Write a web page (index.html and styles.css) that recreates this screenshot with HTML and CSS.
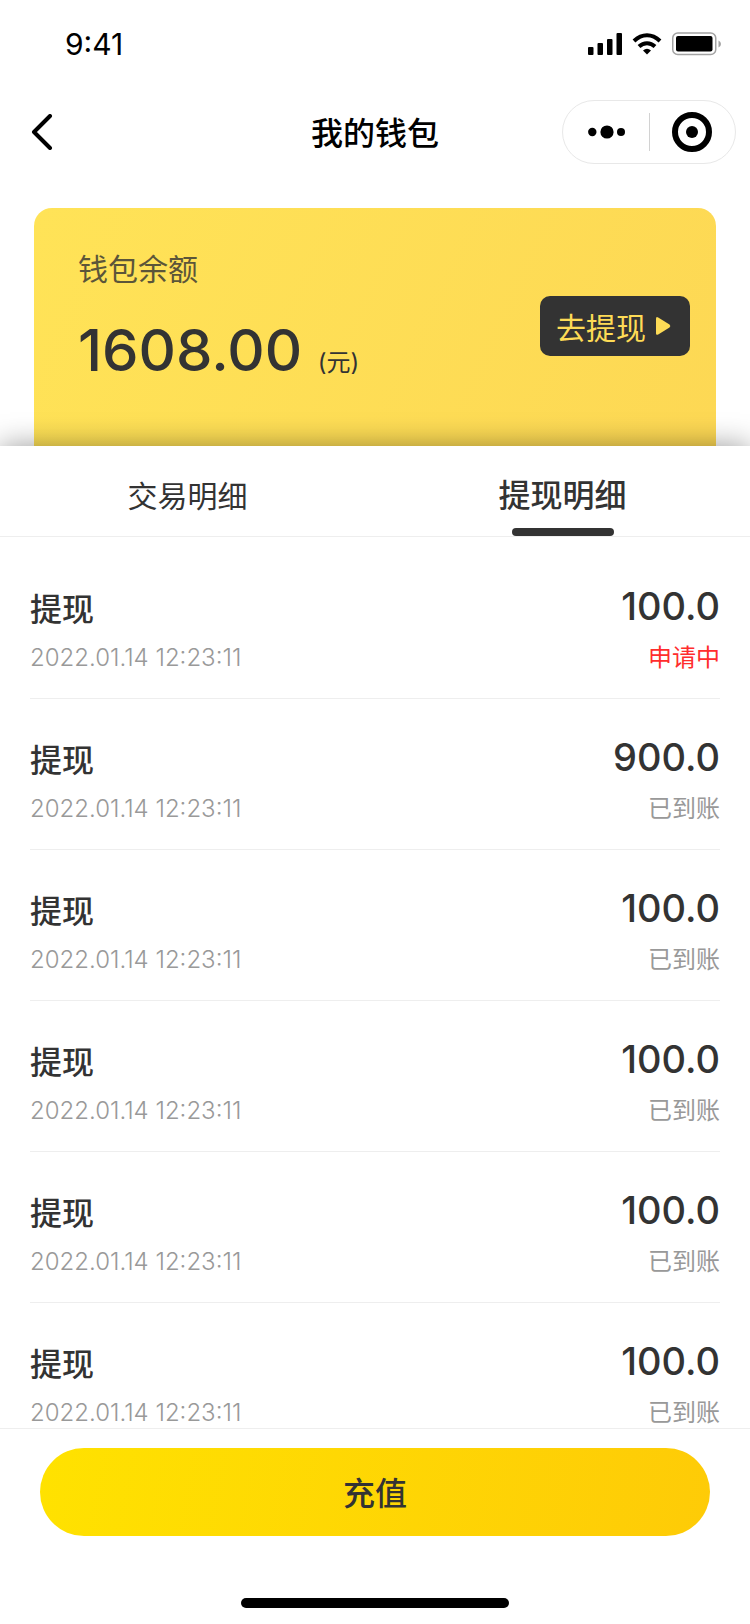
FILE: index.html
```
<!DOCTYPE html>
<html lang="zh-Hans">
<head>
    <meta charset="UTF-8">
    <meta name="viewport" content="width=device-width, initial-scale=1.0">
    <title>我的钱包</title>
    <link rel="stylesheet" href="styles.css">
</head>
<body>

    <div class="status-bar">
        <span class="time">9:41</span>
        <div class="status-icons">
            <svg width="34" height="22" viewBox="0 0 34 22">
                <rect x="0" y="14" width="5.500" height="8" rx="1"/>
                <rect x="9.500" y="10" width="5.500" height="12" rx="1"/>
                <rect x="19" y="6" width="5.500" height="16" rx="1"/>
                <rect x="28.500" y="0" width="5.500" height="22" rx="1"/>
            </svg>
            <svg width="30" height="22" viewBox="0 0 30 22" fill="none" stroke="#000" stroke-width="4">
                <path d="M2 8Q8 2.300 15 2.300T28 8"/>
                <path d="M7 13.500Q10.500 10.200 15 10.200T23 13.500"/>
                <path d="M11 17.500Q15 14 19 17.500L15 21.500Z" fill="#000" stroke="none"/>
            </svg>
            <svg width="50" height="24" viewBox="0 0 50 24">
                <rect x="0.750" y="1" width="43" height="21.500" rx="5" fill="none" stroke="#a3a3a3" stroke-width="1.500"/>
                <rect x="4" y="4" width="36.500" height="15.500" rx="2"/>
                <path d="M46.500 8.500Q49 9.500 49 12T46.500 15.500Z" fill="#a3a3a3"/>
            </svg>
        </div>
    </div>

    <header class="nav-bar">
        <button class="back-btn" aria-label="返回">
            <svg width="22" height="36" viewBox="0 0 22 36" fill="none" stroke="#000" stroke-width="4" stroke-linecap="round" stroke-linejoin="round">
                <path d="M19 2L3 18L19 34"/>
            </svg>
        </button>
        <h1>我的钱包</h1>
        <div class="capsule">
            <button aria-label="更多">
                <svg width="38" height="14" viewBox="0 0 38 14">
                    <circle cx="5.300" cy="7" r="4.200"/>
                    <circle cx="20" cy="7" r="6.600"/>
                    <circle cx="34" cy="7" r="4"/>
                </svg>
            </button>
            <button aria-label="关闭">
                <svg width="40" height="40" viewBox="0 0 40 40">
                    <circle cx="20" cy="20" r="17" fill="none" stroke="#000" stroke-width="6"/>
                    <circle cx="20" cy="20" r="6"/>
                </svg>
            </button>
        </div>
    </header>

    <section class="wallet-card">
        <div>
            <p class="wallet-label">钱包余额</p>
            <p class="wallet-balance">1608.00 <span>(元)</span></p>
        </div>
        <button class="withdraw-btn">
            去提现
            <svg width="16" height="20" viewBox="0 0 16 20">
                <path d="M0 2.500Q0 .2 2.200 1.400L13.500 8.600Q15.200 10 13.500 11.400L2.200 18.400Q0 19.600 0 17.500Z" fill="#fddb56"/>
            </svg>
        </button>
    </section>

    <main class="sheet">
        <div class="tabs" role="tablist">
            <button class="tab" role="tab" aria-selected="false">交易明细</button>
            <button class="tab active" role="tab" aria-selected="true">提现明细</button>
        </div>

        <ul class="record-list">
            <li class="record">
                <span class="record-title">提现</span>
                <span class="record-amount">100.0</span>
                <span class="record-date">2022.01.14 12:23:11</span>
                <span class="record-status pending">申请中</span>
            </li>
            <li class="record">
                <span class="record-title">提现</span>
                <span class="record-amount">900.0</span>
                <span class="record-date">2022.01.14 12:23:11</span>
                <span class="record-status">已到账</span>
            </li>
            <li class="record">
                <span class="record-title">提现</span>
                <span class="record-amount">100.0</span>
                <span class="record-date">2022.01.14 12:23:11</span>
                <span class="record-status">已到账</span>
            </li>
            <li class="record">
                <span class="record-title">提现</span>
                <span class="record-amount">100.0</span>
                <span class="record-date">2022.01.14 12:23:11</span>
                <span class="record-status">已到账</span>
            </li>
            <li class="record">
                <span class="record-title">提现</span>
                <span class="record-amount">100.0</span>
                <span class="record-date">2022.01.14 12:23:11</span>
                <span class="record-status">已到账</span>
            </li>
            <li class="record">
                <span class="record-title">提现</span>
                <span class="record-amount">100.0</span>
                <span class="record-date">2022.01.14 12:23:11</span>
                <span class="record-status">已到账</span>
            </li>
        </ul>

        <footer class="footer">
            <button class="recharge-btn">充值</button>
            <div class="home-indicator"></div>
        </footer>
    </main>

</body>
</html>
```
FILE: styles.css
```
* {
    box-sizing: border-box;
    margin: 0;
    padding: 0;
}

body {
    display: flex;
    flex-direction: column;
    height: 100vh;
    overflow: hidden;
    background-color: #fff;
    color: #333;
    font-family: Inter, "Noto Sans CJK SC", sans-serif;
}

button {
    border: none;
    background: none;
    color: inherit;
    font-family: inherit;
    cursor: pointer;
}

svg {
    display: block;
}

/* 状态栏 */
.status-bar {
    display: flex;
    justify-content: space-between;
    align-items: center;
    height: 88px;
    padding: 0 28px 0 65px;
    color: #000;
}

.time {
    font-size: 30px;
    font-weight: 400;
}

.status-icons {
    display: flex;
    align-items: center;
    gap: 10px;
}

/* 导航栏 */
.nav-bar {
    display: grid;
    grid-template-columns: 1fr auto 1fr;
    align-items: center;
    height: 88px;
    padding: 0 14px;
    color: #000;
}

.nav-bar h1 {
    padding-bottom: 2px;
    font-size: 32px;
    font-weight: 500;
}

.back-btn {
    justify-self: start;
    margin-left: 17px;
}

.capsule {
    display: flex;
    justify-self: end;
    width: 174px;
    height: 64px;
    border: 1px solid #e8e8e8;
    border-radius: 32px;
}

.capsule button {
    display: flex;
    flex: 1;
    align-items: center;
    justify-content: center;
    margin: 12px 0;
}

.capsule button + button {
    border-left: 1px solid #d2d2d2;
}

/* 余额卡片 */
.wallet-card {
    display: flex;
    flex-shrink: 0;
    justify-content: space-between;
    align-items: flex-start;
    height: 238px;
    margin: 32px 34px 0;
    padding: 40px 26px 0 44px;
    border-radius: 18px 18px 0 0;
    background: linear-gradient(115deg, #ffe357, #fdd854);
}

.wallet-label {
    font-size: 30px;
    line-height: 42px;
    opacity: 0.8;
}

.wallet-balance {
    margin-top: 24px;
    font-size: 58px;
    font-weight: 500;
    line-height: 72px;
}

.wallet-balance span {
    font-size: 24px;
    font-weight: 400;
}

.withdraw-btn {
    display: flex;
    align-items: center;
    justify-content: center;
    gap: 10px;
    width: 150px;
    height: 60px;
    margin-top: 48px;
    padding-right: 2px;
    border-radius: 10px;
    background-color: #333;
    color: #fddb56;
    font-size: 30px;
}

/* 明细面板 */
.sheet {
    display: flex;
    flex: 1;
    flex-direction: column;
    min-height: 0;
    background-color: #fff;
    box-shadow: 0 0 28px rgba(0, 0, 0, 0.4);
}

.tabs {
    display: flex;
    flex-shrink: 0;
    height: 91px;
    border-bottom: 1px solid #eee;
}

.tab {
    display: flex;
    flex: 1;
    flex-direction: column;
    align-items: center;
    padding-top: 26px;
    font-size: 30px;
    line-height: 48px;
}

.tab.active {
    font-size: 32px;
    font-weight: 500;
}

.tab.active::after {
    content: "";
    width: 102px;
    height: 8px;
    margin-top: auto;
    border-radius: 4px;
    background-color: #333;
}

.record-list {
    flex: 1;
    min-height: 0;
    padding: 11px 30px 0;
    overflow: hidden;
    list-style: none;
}

.record {
    display: grid;
    grid-template-columns: 1fr auto;
    grid-template-rows: 48px 30px;
    row-gap: 13px;
    align-items: end;
    height: 151px;
    padding-top: 34px;
    border-bottom: 1px solid #eee;
}

.record-title {
    font-size: 32px;
    font-weight: 500;
    line-height: 40px;
}

.record-amount {
    font-size: 38px;
    font-weight: 500;
    line-height: 48px;
    text-align: right;
}

.record-date,
.record-status {
    color: #999;
    font-size: 24px;
    line-height: 30px;
}

.record-date {
    font-weight: 300;
}

.record-status {
    text-align: right;
}

.record-status.pending {
    color: #ff2d2d;
}

/* 底部操作栏 */
.footer {
    display: flex;
    flex-direction: column;
    flex-shrink: 0;
    align-items: center;
    padding: 19px 40px 16px;
    border-top: 1px solid #eee;
}

.recharge-btn {
    width: 100%;
    height: 88px;
    padding-bottom: 2px;
    border-radius: 44px;
    background: linear-gradient(100deg, #ffe200, #fecb07);
    font-size: 32px;
    font-weight: 500;
}

.home-indicator {
    width: 268px;
    height: 10px;
    margin-top: 62px;
    border-radius: 5px;
    background-color: #000;
}
```
